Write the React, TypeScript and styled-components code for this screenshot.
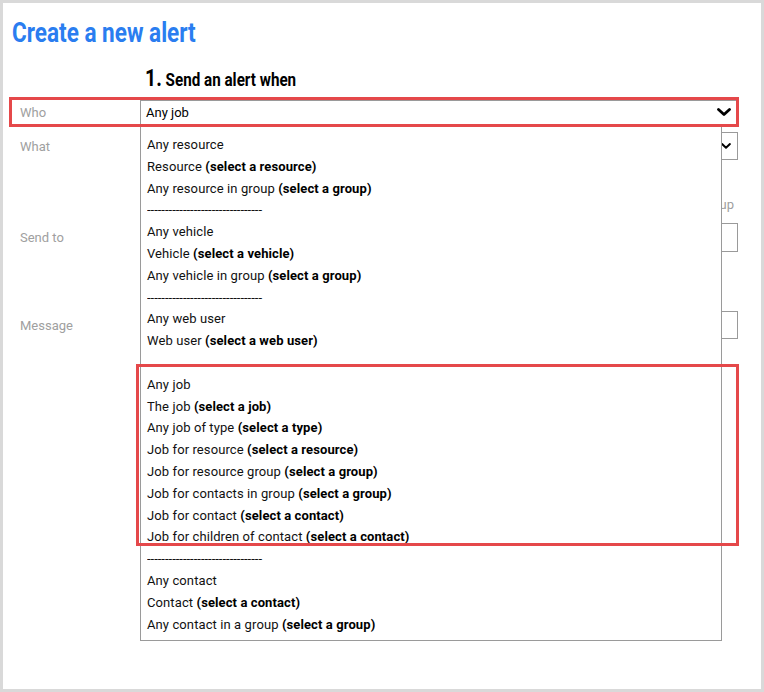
import React from 'react';
import styled, { createGlobalStyle } from 'styled-components';

type Option = { text: string; pick?: string };

const groups: Option[][] = [
  [
    { text: 'Any resource' },
    { text: 'Resource', pick: 'select a resource' },
    { text: 'Any resource in group', pick: 'select a group' },
  ],
  [
    { text: 'Any vehicle' },
    { text: 'Vehicle', pick: 'select a vehicle' },
    { text: 'Any vehicle in group', pick: 'select a group' },
  ],
  [
    { text: 'Any web user' },
    { text: 'Web user', pick: 'select a web user' },
    { text: '' },
    { text: 'Any job' },
    { text: 'The job', pick: 'select a job' },
    { text: 'Any job of type', pick: 'select a type' },
    { text: 'Job for resource', pick: 'select a resource' },
    { text: 'Job for resource group', pick: 'select a group' },
    { text: 'Job for contacts in group', pick: 'select a group' },
    { text: 'Job for contact', pick: 'select a contact' },
    { text: 'Job for children of contact', pick: 'select a contact' },
  ],
  [
    { text: 'Any contact' },
    { text: 'Contact', pick: 'select a contact' },
    { text: 'Any contact in a group', pick: 'select a group' },
  ],
];

const Chevron: React.FC<{ size: number }> = ({ size }) => (
  <svg width={size} height={size * 0.6} viewBox="0 0 14 8.4">
    <polyline
      points="1.5,1.5 7,6.6 12.5,1.5"
      fill="none"
      stroke="#000"
      strokeWidth="2.8"
      strokeLinecap="round"
      strokeLinejoin="round"
    />
  </svg>
);

const App: React.FC = () => {
  return (
    <>
      <GlobalStyle />
      <Frame>
        <Title>Create a new alert</Title>
        <StepHeading>
          <StepNumber>1.</StepNumber> Send an alert when
        </StepHeading>

        <Form>
          <FieldRow $highlighted>
            <Label>Who</Label>
            <Select>
              <SelectValue>Any job</SelectValue>
              <Chevron size={14} />
              <Menu>
                {groups.map((group, gi) => (
                  <React.Fragment key={gi}>
                    {gi > 0 && <Divider>--------------------------------</Divider>}
                    {group.map((opt, oi) => (
                      <MenuItem key={oi}>
                        {opt.text}
                        {opt.pick && (
                          <>
                            {' '}
                            <b>({opt.pick})</b>
                          </>
                        )}
                      </MenuItem>
                    ))}
                  </React.Fragment>
                ))}
                <JobHighlight />
              </Menu>
            </Select>
          </FieldRow>

          <FieldRow $top={5}>
            <Label>What</Label>
            <Box $height={28}>
              <SmallChevron>
                <Chevron size={10} />
              </SmallChevron>
            </Box>
          </FieldRow>

          <OptionHint>Any resource in group</OptionHint>

          <FieldRow $top={10}>
            <Label>Send to</Label>
            <Box $height={29} />
          </FieldRow>

          <FieldRow $top={59}>
            <Label>Message</Label>
            <Box $height={28} />
          </FieldRow>
        </Form>
      </Frame>
    </>
  );
};

export default App;

const GlobalStyle = createGlobalStyle`
  body {
    margin: 0;
    background: #ffffff;
    font-family: Roboto, "Liberation Sans", sans-serif;
  }
`;

const Frame = styled.div`
  width: 764px;
  height: 692px;
  box-sizing: border-box;
  border: 3px solid #d9d9d9;
  background: #ffffff;
  padding: 0 0 0 9px;
  font-family: Roboto, "Liberation Sans", sans-serif;
  color: #111;
`;

const Title = styled.h1`
  margin: 15px 0 0 0;
  display: inline-block;
  font-size: 27px;
  line-height: 30px;
  font-weight: 700;
  color: #2a7df0;
  transform: scaleX(0.835);
  transform-origin: left center;
  white-space: nowrap;
`;

const StepHeading = styled.h2`
  margin: 19px 0 0 133px;
  font-size: 18px;
  line-height: 24px;
  font-weight: 700;
  color: #000;
  transform: scaleX(0.845);
  transform-origin: left center;
  white-space: nowrap;
`;

const StepNumber = styled.span`
  font-size: 23px;
`;

const Form = styled.div`
  margin-top: 5px;
  width: 726px;
  display: flex;
  flex-direction: column;
`;

const FieldRow = styled.div<{ $highlighted?: boolean; $top?: number }>`
  display: grid;
  grid-template-columns: 128px 1fr;
  align-items: center;
  box-sizing: border-box;
  margin-top: ${(p) => p.$top ?? 0}px;
  ${(p) =>
    p.$highlighted &&
    `
    width: 730px;
    height: 30px;
    margin-left: -3px;
    border: 3px solid #e5484a;
    position: relative;
    z-index: 2;
  `}
`;

const Label = styled.div`
  padding-left: 8px;
  font-size: 13px;
  color: #a0a0a0;
`;

const Select = styled.div`
  position: relative;
  height: 24px;
  box-sizing: border-box;
  border-top: 1px solid #9a9a9a;
  border-left: 1px solid #9a9a9a;
  display: flex;
  align-items: center;
  justify-content: space-between;
  padding: 0 5px 0 5px;
`;

const SelectValue = styled.span`
  font-size: 13px;
  color: #000;
`;

const Menu = styled.div`
  position: absolute;
  left: -1px;
  top: calc(100% + 3px);
  width: 582px;
  height: 514px;
  box-sizing: border-box;
  border: 1px solid #9a9a9a;
  border-top: none;
  background: #fff;
  padding: 7px 0 0 6px;
`;

const MenuItem = styled.div`
  height: 21.8px;
  line-height: 21.8px;
  font-size: 13px;
  letter-spacing: 0.1px;
  color: #111;
  white-space: nowrap;

  b {
    font-weight: 700;
    color: #000;
  }
`;

const Divider = styled(MenuItem)`
  letter-spacing: 0;
  overflow: hidden;
`;

const JobHighlight = styled.div`
  position: absolute;
  left: -5px;
  top: 237px;
  width: 603px;
  height: 182px;
  box-sizing: border-box;
  border: 3px solid #e5484a;
  pointer-events: none;
`;

const Box = styled.div<{ $height: number }>`
  height: ${(p) => p.$height}px;
  box-sizing: border-box;
  border: 1px solid #9a9a9a;
  display: flex;
  align-items: center;
  justify-content: flex-end;
`;

const SmallChevron = styled.span`
  display: flex;
  padding-right: 6px;
`;

const OptionHint = styled.div`
  margin-top: 37px;
  align-self: flex-end;
  padding-right: 4px;
  height: 16px;
  line-height: 16px;
  font-size: 13px;
  color: #a0a0a0;
`;
